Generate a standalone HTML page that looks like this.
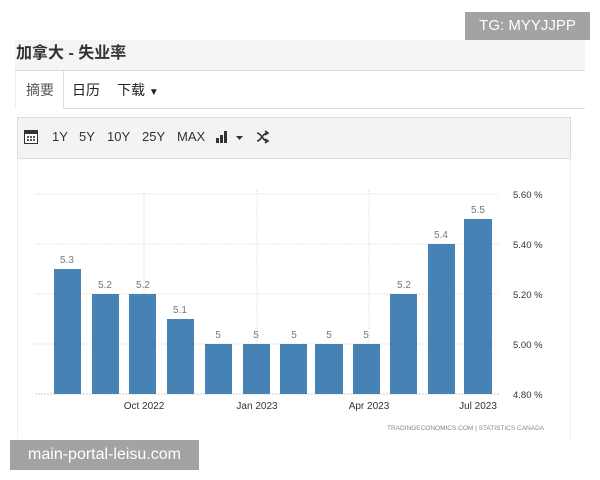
<!DOCTYPE html>
<html><head><meta charset="utf-8"><style>
body{margin:0;width:600px;height:480px;background:#fff;position:relative;overflow:hidden;font-family:"Liberation Sans","Noto Sans CJK SC",sans-serif;}
.abs{position:absolute}
.tb{position:absolute;top:129px;font-size:13px;color:#333}
</style></head><body>
<div class="abs" style="left:15px;top:40px;width:570px;height:30px;background:#f5f5f5;border-bottom:1px solid #ddd"></div>
<div class="abs" style="left:16px;top:41px;font-size:16px;font-weight:bold;color:#333;line-height:26px">加拿大 - 失业率</div>
<div class="abs" style="left:465px;top:12px;width:125px;height:28px;background:#a3a3a3;color:#fff;font-size:15px;line-height:28px;text-align:center">TG: MYYJJPP</div>
<div class="abs" style="left:15px;top:108px;width:570px;height:1px;background:#ddd"></div>
<div class="abs" style="left:15px;top:71px;width:47px;height:38px;background:#fff;border-right:1px solid #ddd;border-left:1px solid #eee"></div>
<div class="abs" style="left:26px;top:80px;font-size:14px;color:#555">摘要</div>
<div class="abs" style="left:72px;top:80px;font-size:14px;color:#222">日历</div>
<div class="abs" style="left:117px;top:80px;font-size:14px;color:#222">下载 <span style="font-size:10px">▼</span></div>
<div class="abs" style="left:17px;top:117px;width:552px;height:40px;background:#f3f3f3;border:1px solid #ddd"></div>
<div class="abs" style="left:17px;top:158px;width:552px;height:280px;border-left:1px solid #eee;border-right:1px solid #eee"></div>
<svg class="abs" style="left:24px;top:130px" width="14" height="14"><rect x="0.5" y="0.5" width="13" height="13" fill="#fff" stroke="#333"/><rect x="0" y="0" width="14" height="4" fill="#333"/><g fill="#555"><rect x="3" y="6" width="2" height="2"/><rect x="6" y="6" width="2" height="2"/><rect x="9" y="6" width="2" height="2"/><rect x="3" y="9" width="2" height="2"/><rect x="6" y="9" width="2" height="2"/><rect x="9" y="9" width="2" height="2"/></g></svg>
<div class="tb" style="left:52px">1Y</div>
<div class="tb" style="left:79px">5Y</div>
<div class="tb" style="left:107px">10Y</div>
<div class="tb" style="left:142px">25Y</div>
<div class="tb" style="left:177px">MAX</div>
<svg class="abs" style="left:216px;top:128px" width="60" height="18"><rect x="0" y="10" width="3" height="5" fill="#333"/><rect x="4" y="7" width="3" height="8" fill="#333"/><rect x="8" y="3" width="3" height="12" fill="#333"/><path d="M20 8h7l-3.5 4z" fill="#333"/><path d="M41 5c4 0 6 8 10 8M41 13c4 0 6-8 10-8M49 3l3 2-3 2M49 11l3 2-3 2" stroke="#333" stroke-width="1.6" fill="none"/></svg>
<svg class="abs" style="left:0;top:0" width="600" height="480">
<g stroke="#e6e6e6" stroke-dasharray="2,1"><line x1="35" y1="194" x2="500" y2="194"/><line x1="35" y1="244" x2="500" y2="244"/><line x1="35" y1="294" x2="500" y2="294"/><line x1="35" y1="344" x2="500" y2="344"/><line x1="35" y1="394" x2="500" y2="394" stroke="#ccc"/><line x1="144" y1="190" x2="144" y2="394"/><line x1="257" y1="190" x2="257" y2="394"/><line x1="369" y1="190" x2="369" y2="394"/></g>
<g fill="#4682b4">
<rect x="54" y="269" width="27" height="125"/><rect x="92" y="294" width="27" height="100"/><rect x="129" y="294" width="27" height="100"/><rect x="167" y="319" width="27" height="75"/><rect x="205" y="344" width="27" height="50"/><rect x="243" y="344" width="27" height="50"/><rect x="280" y="344" width="27" height="50"/><rect x="315" y="344" width="28" height="50"/><rect x="353" y="344" width="27" height="50"/><rect x="390" y="294" width="27" height="100"/><rect x="428" y="244" width="27" height="150"/><rect x="464" y="219" width="28" height="175"/>
</g>
<g font-size="10" fill="#777" text-anchor="middle" font-family="Liberation Sans">
<text x="67" y="263">5.3</text><text x="105" y="288">5.2</text><text x="143" y="288">5.2</text><text x="180" y="313">5.1</text><text x="218" y="338">5</text><text x="256" y="338">5</text><text x="294" y="338">5</text><text x="329" y="338">5</text><text x="366" y="338">5</text><text x="404" y="288">5.2</text><text x="441" y="238">5.4</text><text x="478" y="213">5.5</text>
</g>
<g font-size="9.5" fill="#333" font-family="Liberation Sans">
<text x="513" y="198">5.60 %</text><text x="513" y="248">5.40 %</text><text x="513" y="298">5.20 %</text><text x="513" y="348">5.00 %</text><text x="513" y="398">4.80 %</text>
</g>
<g font-size="10" fill="#333" text-anchor="middle" font-family="Liberation Sans">
<text x="144" y="409">Oct 2022</text><text x="257" y="409">Jan 2023</text><text x="369" y="409">Apr 2023</text><text x="478" y="409">Jul 2023</text>
</g>
<text x="387" y="430" font-size="6.5" fill="#888" font-family="Liberation Sans">TRADINGECONOMICS.COM  |  STATISTICS  CANADA</text>
</svg>
<div class="abs" style="left:10px;top:440px;width:189px;height:30px;background:#a3a3a3;color:#fff;font-size:16px;line-height:30px;text-align:center">main-portal-leisu.com</div>
</body></html>
